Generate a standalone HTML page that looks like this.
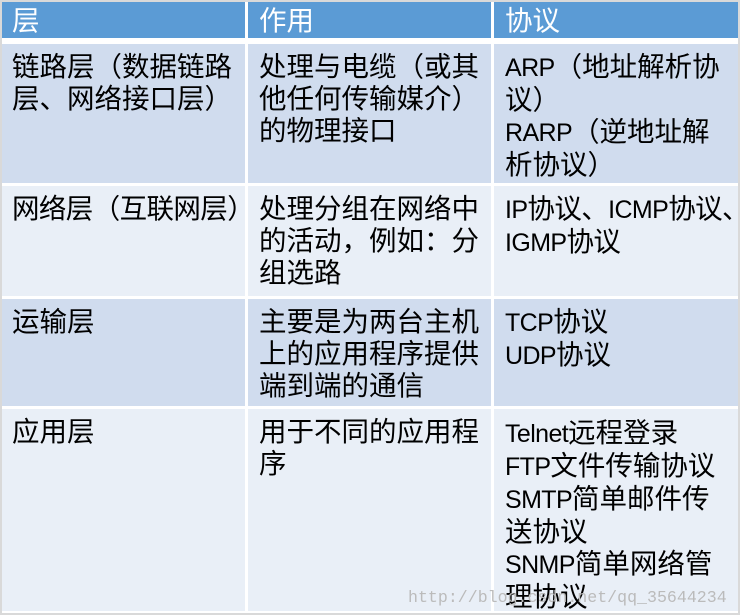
<!DOCTYPE html>
<html><head><meta charset="utf-8"><style>
html,body{margin:0;padding:0;}
body{width:740px;height:615px;background:#d9d9d9;position:relative;overflow:hidden;font-family:"Liberation Sans","Noto Sans CJK SC",sans-serif;}
.c{position:absolute;box-sizing:border-box;font-size:27.5px;line-height:32px;color:#000;padding-top:7px;white-space:nowrap;}
.h{background:#5b9bd5;color:#fff;padding-top:3px;}
.d{background:#d0dcee;}
.l{background:#e9eff7;}
.w{position:absolute;background:#fff;}
.e{font-size:25px;letter-spacing:-0.6px;}
.wm{position:absolute;left:408px;top:588px;font-family:"Liberation Mono",monospace;font-size:16.6px;color:#bbb;white-space:nowrap;}
</style></head><body>
<div class="w" style="left:2px;top:2px;width:736px;height:611px"></div>
<div class="c h" style="left:2px;top:2px;width:243px;height:36px;padding-left:10px">层</div>
<div class="c h" style="left:248px;top:2px;width:243px;height:36px;padding-left:11px">作用</div>
<div class="c h" style="left:494px;top:2px;width:244px;height:36px;padding-left:11px">协议</div>

<div class="c d" style="left:2px;top:44px;width:243px;height:139px;padding-left:10px">链路层（数据链路<br>层、网络接口层）</div>
<div class="c d" style="left:248px;top:44px;width:243px;height:139px;padding-left:11px">处理与电缆（或其<br>他任何传输媒介）<br>的物理接口</div>
<div class="c d" style="left:494px;top:44px;width:244px;height:139px;padding-left:11px"><span class="e">ARP</span>（地址解析协<br>议）<br><span class="e">RARP</span>（逆地址解<br>析协议）</div>

<div class="c l" style="left:2px;top:186px;width:243px;height:110px;padding-left:10px;letter-spacing:-0.6px;overflow:visible;z-index:2">网络层（互联网层）</div>
<div class="c l" style="left:248px;top:186px;width:243px;height:110px;padding-left:11px">处理分组在网络中<br>的活动，例如：分<br>组选路</div>
<div class="c l" style="left:494px;top:186px;width:244px;height:110px;padding-left:11px;letter-spacing:-0.6px"><span class="e">IP</span>协议、<span class="e">ICMP</span>协议、<br><span class="e">IGMP</span>协议</div>

<div class="c d" style="left:2px;top:299px;width:243px;height:107px;padding-left:10px">运输层</div>
<div class="c d" style="left:248px;top:299px;width:243px;height:107px;padding-left:11px">主要是为两台主机<br>上的应用程序提供<br>端到端的通信</div>
<div class="c d" style="left:494px;top:299px;width:244px;height:107px;padding-left:11px"><span class="e">TCP</span>协议<br><span class="e">UDP</span>协议</div>

<div class="c l" style="left:2px;top:409px;width:243px;height:202px;padding-left:10px">应用层</div>
<div class="c l" style="left:248px;top:409px;width:243px;height:202px;padding-left:11px">用于不同的应用程<br>序</div>
<div class="c l" style="left:494px;top:409px;width:244px;height:202px;padding-left:11px;padding-top:8px"><span class="e">Telnet</span>远程登录<br><span class="e">FTP</span>文件传输协议<br><span class="e">SMTP</span>简单邮件传<br>送协议<br><span class="e">SNMP</span>简单网络管<br>理协议</div>
<div class="wm">http://blog.csdn.net/qq_35644234</div>
</body></html>
